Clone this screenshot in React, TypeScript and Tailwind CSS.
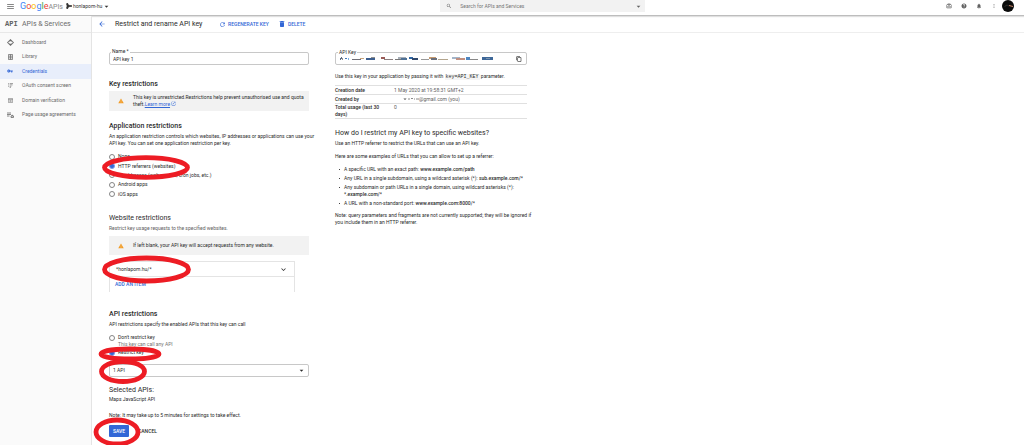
import { useState } from "react";
import type { ReactNode } from "react";
import {
  MdArrowBack,
  MdArrowDropDown,
  MdCardGiftcard,
  MdContentCopy,
  MdDelete,
  MdExpandMore,
  MdHelp,
  MdMenu,
  MdMoreVert,
  MdNotifications,
  MdOpenInNew,
  MdRefresh,
  MdSearch,
  MdVpnKey,
  MdWarning,
} from "react-icons/md";

const DashboardIcon = () => (
  <svg viewBox="0 0 14 14" className="size-[7px]" fill="currentColor">
    <path d="M7 0l3.500 3.500L8.600 5.400 7 3.800 5.400 5.400 3.500 3.500zM7 14l-3.500-3.500 1.900-1.900L7 10.200l1.600-1.600 1.900 1.900zM0 7l3.500-3.500 1.200 1.200L2.400 7l2.300 2.300-1.200 1.200zM14 7l-3.500 3.500-1.200-1.200L11.600 7 9.300 4.700l1.200-1.200z" />
  </svg>
);

const LibraryIcon = () => (
  <svg viewBox="0 0 12 14" className="h-[6px] w-[5px]" fill="none" stroke="currentColor" strokeWidth="1.8">
    <path d="M1 1h10v12H1zM1 5h10M1 9h10M6 1v12" />
  </svg>
);

const ConsentIcon = () => (
  <svg viewBox="0 0 12 12" className="size-[5px]" fill="none" stroke="currentColor" strokeWidth="1.6">
    <path d="M0 1h2M4 1h8M0 4.500h2M4 4.500h7M0 8h2M4 8h4M4 11h3" />
  </svg>
);

const DomainIcon = () => (
  <svg viewBox="0 0 12 12" className="size-[5px]" fill="none" stroke="currentColor" strokeWidth="1.3">
    <path d="M1 1h10v10H1zM1 3.500h10M3.500 6h5M3.500 8.500h5" />
  </svg>
);

const AgreementsIcon = () => (
  <svg viewBox="0 0 14 12" className="h-[6px] w-[7px]" fill="none" stroke="currentColor" strokeWidth="1.6">
    <path d="M0 2h8M0 5h8M0 8h5" />
    <path d="M8 8h5v3H8zM9.500 8V6.500h2V8" />
  </svg>
);

const navItems = [
  { label: "Dashboard", icon: <DashboardIcon /> },
  { label: "Library", icon: <LibraryIcon /> },
  { label: "Credentials", icon: <MdVpnKey className="size-[6px]" />, active: true },
  { label: "OAuth consent screen", icon: <ConsentIcon /> },
  { label: "Domain verification", icon: <DomainIcon /> },
  { label: "Page usage agreements", icon: <AgreementsIcon /> },
];

const appRestrictions = [
  "None",
  "HTTP referrers (websites)",
  "IP addresses (web servers, cron jobs, etc.)",
  "Android apps",
  "iOS apps",
];

// Pixelated blocks that hide the key value: x, y, width, height, colour
const keyBlocks: [number, number, number, number, string][] = [
  [0, 1, 1, 2, "#5a6b80"],
  [1, 0, 1, 2, "#5a6b80"],
  [2, 1, 1, 2, "#8d8d8d"],
  [5, 1, 2, 1, "#3f77b8"],
  [8, 1, 1, 2, "#7ab0e6"],
  [12, 2, 9, 1, "#6f6f77"],
  [20, 1, 4, 1, "#c9a57c"],
  [26, 1, 9, 2, "#3d5f8f"],
  [31, 0, 4, 1, "#8f8f8f"],
  [41, 0, 4, 2, "#9a5b57"],
  [44, 2, 9, 1, "#8c7f7f"],
  [55, 2, 6, 1, "#777777"],
  [58, 0, 8, 2, "#a6aeb8"],
  [61, 1, 6, 2, "#4f7196"],
  [69, 0, 4, 2, "#2f66a5"],
  [72, 1, 6, 2, "#31486b"],
  [81, 2, 8, 1, "#999999"],
  [89, 0, 7, 2, "#c59a70"],
  [91, 1, 6, 2, "#6a6f7b"],
  [98, 2, 10, 1, "#b3a58d"],
  [112, 0, 8, 2, "#a3b5c9"],
  [116, 1, 9, 2, "#c08f80"],
  [126, 0, 4, 3, "#4f86c0"],
  [130, 2, 8, 1, "#888888"],
  [142, 0, 11, 3, "#3d6798"],
  [146, 1, 4, 1, "#7b93ad"],
];

function Warning({ children, className }: { children: ReactNode; className: string }) {
  return (
    <div className={`flex items-center bg-[#f2f2f2] pl-[9px] ${className}`}>
      <MdWarning className="mr-[9px] size-[6px] shrink-0 text-[#f29b24]" />
      <p className="whitespace-nowrap">{children}</p>
    </div>
  );
}

function Radio({
  name,
  label,
  checked,
  onChange,
}: {
  name: string;
  label: string;
  checked: boolean;
  onChange: () => void;
}) {
  return (
    <label className="flex items-center gap-[3px]">
      <input
        type="radio"
        name={name}
        checked={checked}
        onChange={onChange}
        className="size-[6px] appearance-none rounded-full border border-[#858585] bg-white checked:border-[#7f9fe6] checked:bg-[#3367d6]"
      />
      {label}
    </label>
  );
}

function TopBar() {
  return (
    <header className="flex h-4 items-center border-b border-[#bdbdbd] bg-white pb-[3px] text-[#616161] shadow-[0_1px_1px_#e0e0e0]">
      <div className="flex w-[43%] shrink-0 items-center">
        <button type="button" aria-label="Menu" className="ml-[6px]">
          <MdMenu className="size-[9px]" />
        </button>
        <a href="#home" className="ml-[5px] flex items-baseline text-[9px] leading-[10px]">
          <span>
            <span className="text-[#4285f4]">G</span>
            <span className="text-[#ea4335]">o</span>
            <span className="text-[#fbbc05]">o</span>
            <span className="text-[#4285f4]">g</span>
            <span className="text-[#34a853]">l</span>
            <span className="text-[#ea4335]">e</span>
          </span>
          <span className="text-[7px] text-[#8a8a8a]">APIs</span>
        </a>
        <button type="button" className="ml-[3px] flex items-center text-[5px] text-[#333]">
          <svg viewBox="0 0 12 12" className="mr-px size-[6px]" fill="currentColor">
            <path d="M2 2l7 4-7 4z" stroke="currentColor" strokeWidth="1.500" />
            <circle cx="2.500" cy="2" r="2" />
            <circle cx="2.500" cy="10" r="2" />
            <circle cx="10" cy="6" r="2" />
          </svg>
          honlapom-hu
          <MdArrowDropDown className="size-[9px]" />
        </button>
      </div>
      <div className="flex h-3 w-[205px] shrink-0 items-center bg-[#f2f2f2] pr-[2px] pl-[6px]">
        <MdSearch className="size-[6px]" />
        <input
          aria-label="Search"
          placeholder="Search for APIs and Services"
          className="ml-[8px] min-w-0 flex-1 text-[5px] outline-none placeholder:text-[#757575]"
        />
        <MdArrowDropDown className="size-[9px]" />
      </div>
      <div className="flex flex-1 items-center justify-end gap-[9px] pr-[10px]">
        <button type="button" aria-label="Gifts">
          <MdCardGiftcard className="size-[6px]" />
        </button>
        <button type="button" aria-label="Help">
          <MdHelp className="size-[6px]" />
        </button>
        <button type="button" aria-label="Notifications">
          <MdNotifications className="size-[6px]" />
        </button>
        <button type="button" aria-label="More">
          <MdMoreVert className="size-[6px]" />
        </button>
        <button type="button" aria-label="Account" className="-ml-[4px]">
          <svg viewBox="0 0 24 24" className="size-3">
            <circle cx="12" cy="12" r="12" fill="#0b0b0b" />
            <path d="M5 13l5-3 4 2" stroke="#4a4a4a" fill="none" />
            <path d="M14 11l8 2" stroke="#c98667" strokeWidth="2" />
          </svg>
        </button>
      </div>
    </header>
  );
}

function Sidebar() {
  return (
    <aside className="w-[92px] shrink-0 border-r border-[#e4e4e4] bg-[#fafafa] text-[#6b6b6b]">
      <div className="flex h-[17px] items-center border-b border-[#e8e8e8] pl-[5px]">
        <span className="w-[17px] font-['Liberation_Mono',monospace] text-[7px] font-bold text-[#616161]">
          API
        </span>
        <span className="text-[7px]">APIs &amp; Services</span>
      </div>
      <nav className="mt-[2px] grid h-[87px] grid-rows-6">
        {navItems.map((item) => (
          <a
            key={item.label}
            href={`#${item.label}`}
            className={`flex items-center ${item.active ? "bg-[#e8eefb] text-[#3367d6]" : ""}`}
          >
            <span className="mr-[2px] flex w-5 justify-center">{item.icon}</span>
            {item.label}
          </a>
        ))}
      </nav>
    </aside>
  );
}

function KeyForm() {
  const [appRestriction, setAppRestriction] = useState(appRestrictions[1]);
  const [restricted, setRestricted] = useState(true);

  return (
    <form className="w-[200px] shrink-0" onSubmit={(e) => e.preventDefault()}>
      <div className="relative">
        <label htmlFor="name" className="absolute -top-[4px] left-[2px] bg-white px-px">
          Name *
        </label>
        <input
          id="name"
          defaultValue="API key 1"
          className="block h-[13px] w-full rounded-[2px] border border-[#c8c8c8] px-[3px] outline-none"
        />
      </div>

      <h2 className="mt-[15px] text-[7px] leading-[8px] font-medium">Key restrictions</h2>
      <Warning className="mt-[3px] h-5">
        This key is unrestricted.Restrictions help prevent unauthorised use and quota
        <br />
        theft.
        <a href="#more" className="text-[#3367d6] underline">
          Learn more
          <MdOpenInNew className="ml-px inline size-[5px] align-baseline" />
        </a>
      </Warning>

      <h2 className="mt-[11px] text-[7px] leading-[8px] font-medium">Application restrictions</h2>
      <p className="mt-[3px] whitespace-nowrap">
        An application restriction controls which websites, IP addresses or applications can use your
        <br />
        API key. You can set one application restriction per key.
      </p>
      <div className="mt-[5px] grid h-[47px] grid-rows-5">
        {appRestrictions.map((label) => (
          <Radio
            key={label}
            name="app"
            label={label}
            checked={appRestriction === label}
            onChange={() => setAppRestriction(label)}
          />
        ))}
      </div>

      <h3 className="mt-[15px] text-[7px] leading-[8px]">Website restrictions</h3>
      <p className="mt-[3px] text-[#616161]">Restrict key usage requests to the specified websites.</p>
      <Warning className="mt-1 h-[19px]">
        If left blank, your API key will accept requests from any website.
      </Warning>
      <div className="mt-[6px] mr-[14px] border-x border-t border-[#e4e4e4]">
        <button
          type="button"
          className="flex h-[15px] w-full items-center justify-between border-b border-[#e4e4e4] px-[6px]"
        >
          *honlapom.hu/*
          <MdExpandMore className="size-[9px]" />
        </button>
        <button type="button" className="block h-[15px] px-[5px] font-medium text-[#3367d6]">
          ADD AN ITEM
        </button>
      </div>

      <h2 className="mt-[18px] text-[7px] leading-[8px] font-medium">API restrictions</h2>
      <p className="mt-[3px]">API restrictions specify the enabled APIs that this key can call</p>
      <div className="mt-[6px]">
        <Radio
          name="api"
          label="Don't restrict key"
          checked={!restricted}
          onChange={() => setRestricted(false)}
        />
        <p className="mb-px pl-[9px] text-[#757575]">This key can call any API</p>
        <Radio
          name="api"
          label="Restrict key"
          checked={restricted}
          onChange={() => setRestricted(true)}
        />
      </div>
      <div className="relative mt-2">
        <select
          aria-label="APIs"
          className="block h-[13px] w-full appearance-none rounded-[2px] border border-[#c8c8c8] px-[3px]"
        >
          <option>1 API</option>
        </select>
        <MdArrowDropDown className="pointer-events-none absolute top-[2px] right-[3px] size-[9px]" />
      </div>

      <h3 className="mt-[9px] text-[7px] leading-[8px]">Selected APIs:</h3>
      <p className="mt-[2px]">Maps JavaScript API</p>
      <p className="mt-[9px]">Note: It may take up to 5 minutes for settings to take effect.</p>
      <div className="mt-[6px] flex gap-[9px] font-medium">
        <button type="submit" className="h-3 w-[20px] rounded-[1px] bg-[#3367d6] text-white">
          SAVE
        </button>
        <button type="button">CANCEL</button>
      </div>
    </form>
  );
}

function Example({ children }: { children: ReactNode }) {
  return (
    <li className="relative before:absolute before:top-[3px] before:-left-[5px] before:size-px before:bg-[#424242]">
      {children}
    </li>
  );
}

function KeyDetails() {
  return (
    <section className="w-[192px] shrink-0">
      <div className="relative flex h-[13px] items-center justify-between rounded-[2px] border border-[#c8c8c8] px-1">
        <span className="absolute -top-[4px] left-[2px] bg-white px-px">API Key</span>
        <svg viewBox="0 0 153 3" className="h-[3px] w-[153px]">
          {keyBlocks.map(([x, y, width, height, fill]) => (
            <rect key={x} x={x} y={y} width={width} height={height} fill={fill} />
          ))}
        </svg>
        <button type="button" aria-label="Copy" className="text-black">
          <MdContentCopy className="size-[6px]" />
        </button>
      </div>
      <p className="mt-2 whitespace-nowrap">
        Use this key in your application by passing it with{" "}
        <code className="bg-[#f5f5f5] px-px font-['Liberation_Mono',monospace] text-[5px]">
          key=API_KEY
        </code>{" "}
        parameter.
      </p>

      <table className="mt-1 w-full text-left">
        <tbody className="divide-y divide-[#e0e0e0] border-y border-[#e0e0e0] text-[#616161]">
          <tr className="h-[9px]">
            <th className="w-[59px] font-medium text-[#2b2b2b]">Creation date</th>
            <td>1 May 2020 at 19:58:31 GMT+2</td>
          </tr>
          <tr className="h-[9px]">
            <th className="font-medium text-[#2b2b2b]">Created by</th>
            <td>
              <svg viewBox="0 0 16 4" className="ml-[9px] inline h-1 w-4">
                <path d="M1 1l1 2 1-2M5 2h2M8 1.500h2M11 2h1M13 2h3" stroke="#8a8a8a" fill="none" />
              </svg>
              @gmail.com (you)
            </td>
          </tr>
          <tr className="align-top">
            <th className="font-medium text-[#2b2b2b]">
              Total usage (last 30
              <br />
              days)
            </th>
            <td>0</td>
          </tr>
        </tbody>
      </table>

      <h2 className="mt-[10px] text-[7px] leading-[8px]">
        How do I restrict my API key to specific websites?
      </h2>
      <p className="mt-[3px]">Use an HTTP referrer to restrict the URLs that can use an API key.</p>
      <p className="mt-[6px]">Here are some examples of URLs that you can allow to set up a referrer:</p>
      <ul className="mt-[6px] grid gap-[2px] pl-[9px] whitespace-nowrap">
        <Example>
          A specific URL with an exact path: <b className="font-medium">www.example.com/path</b>
        </Example>
        <Example>
          Any URL in a single subdomain, using a wildcard asterisk (*):{" "}
          <b className="font-medium">sub.example.com/*</b>
        </Example>
        <Example>
          Any subdomain or path URLs in a single domain, using wildcard asterisks (*):
          <br />
          <b className="font-medium">*.example.com/*</b>
        </Example>
        <Example>
          A URL with a non-standard port: <b className="font-medium">www.example.com:8000/*</b>
        </Example>
      </ul>
      <p className="mt-[5px] whitespace-nowrap">
        Note: query parameters and fragments are not currently supported; they will be ignored if
        <br />
        you include them in an HTTP referrer.
      </p>
    </section>
  );
}

// Hand-drawn markers around the fields to fill in
function Markers() {
  return (
    <svg
      viewBox="0 0 110 300"
      className="pointer-events-none absolute top-[114px] left-0 h-[300px] w-[110px] overflow-hidden"
      fill="none"
      stroke="#ed1c24"
      strokeWidth="4.800"
    >
      <ellipse cx="54" cy="20.500" rx="41.500" ry="9.800" />
      <ellipse cx="54.500" cy="122.500" rx="42" ry="11.500" />
      <ellipse cx="38" cy="207" rx="29" ry="5" />
      <ellipse cx="31" cy="224.500" rx="21.500" ry="10" />
      <ellipse cx="25" cy="285" rx="21" ry="12" />
    </svg>
  );
}

export default function App() {
  return (
    <div className="flex min-h-screen flex-col bg-white font-[Roboto,'Liberation_Sans',sans-serif] text-[5px] leading-[7px] text-[#2b2b2b]">
      <TopBar />
      <div className="flex flex-1">
        <Sidebar />
        <main className="min-w-0 flex-1">
          <div className="flex h-[17px] items-center border-b border-[#eeeeee] pl-[6px]">
            <a href="#back" aria-label="Back" className="text-[#3367d6]">
              <MdArrowBack className="size-[8px]" />
            </a>
            <h1 className="ml-[9px] w-[104px] text-[7px]">Restrict and rename API key</h1>
            <button type="button" className="flex items-center gap-[2px] font-medium text-[#3367d6]">
              <MdRefresh className="size-[7px]" />
              REGENERATE KEY
            </button>
            <button type="button" className="ml-[9px] flex items-center gap-[2px] font-medium text-[#3367d6]">
              <MdDelete className="size-[8px]" />
              DELETE
            </button>
          </div>
          <div className="relative flex items-start gap-[26px] pt-[19px] pb-2 pl-[17px]">
            <KeyForm />
            <KeyDetails />
            <Markers />
          </div>
        </main>
      </div>
    </div>
  );
}
